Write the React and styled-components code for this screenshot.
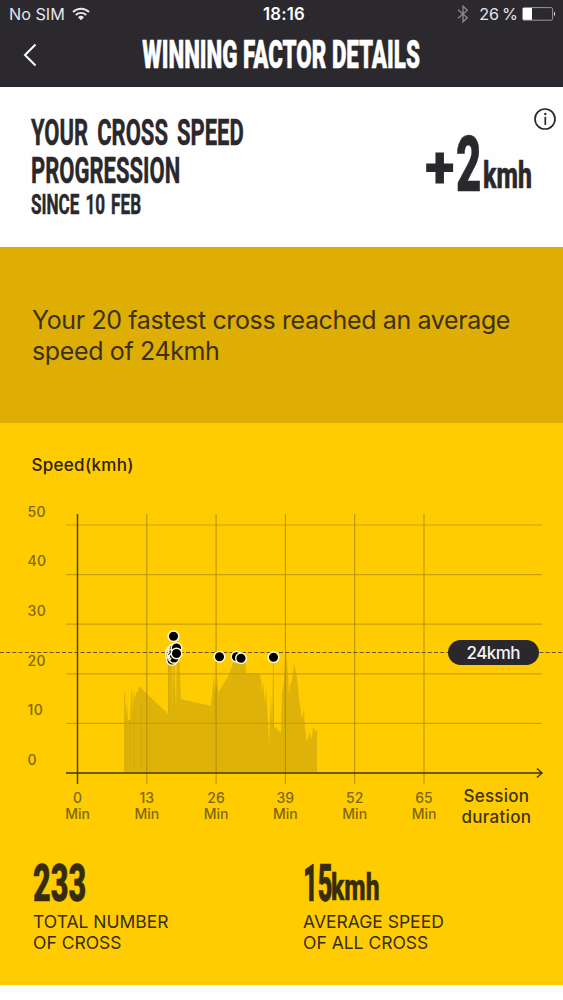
import React from 'react';
import styled, { createGlobalStyle } from 'styled-components';

const GlobalStyle = createGlobalStyle`
  * {
    box-sizing: border-box;
  }

  body {
    margin: 0;
    background: #fff;
    color: #2a282c;
    font-family: Inter, Roboto, sans-serif;
  }
`;

const Screen = styled.main`
  width: 563px;
  height: 1000px;
  overflow: hidden;
  background: #fefefe;
`;

const Header = styled.header`
  height: 87px;
  background: #2b292d;
  color: #fff;
`;

const StatusBar = styled.div`
  display: grid;
  grid-template-columns: 1fr auto 1fr;
  align-items: center;
  height: 28px;
  padding: 0 7px 0 9px;
  font-size: 16.2px;
`;

const StatusGroup = styled.div`
  display: flex;
  align-items: center;
  justify-content: ${({ $end }) => ($end ? 'flex-end' : 'flex-start')};
  gap: ${({ $gap }) => $gap}px;
  color: #e6e5e8;
`;

const Clock = styled.div`
  padding-left: 3px;
  font-size: 16.8px;
  font-weight: 600;
  letter-spacing: 0.2px;
`;

const Charge = styled.span`
  padding-left: 5px;
  margin-right: -1px;
  word-spacing: -1.5px;
`;

const NavBar = styled.div`
  display: grid;
  grid-template-columns: 60px minmax(0, 1fr) 60px;
  align-items: center;
  justify-items: center;
  height: 54px;
`;

const BackButton = styled.button`
  display: flex;
  padding: 0;
  border: 0;
  background: none;
  color: #fff;
`;

// Tall narrow display type, squeezed horizontally from a wide heavy weight
const Display = styled.span`
  display: block;
  width: max-content;
  font-family: Roboto, sans-serif;
  font-weight: ${({ $weight }) => $weight || 900};
  font-size: ${({ $size }) => $size}px;
  line-height: ${({ $line }) => $line}px;
  word-spacing: ${({ $word }) => $word || 0}px;
  white-space: nowrap;
  -webkit-text-stroke: ${({ $stroke }) => $stroke ?? 0.5}px currentColor;
  transform: scaleX(${({ $squeeze }) => $squeeze});
  transform-origin: ${({ $origin }) => $origin || 'left'} center;
`;

const Summary = styled.section`
  display: flex;
  justify-content: space-between;
  height: 160px;
  padding: 27px 31px 0 31px;
  background: #fefefe;
`;

const Headline = styled.div`
  width: 240px;
`;

const Gain = styled.div`
  display: flex;
  width: 107px;
`;

const Slot = styled.div`
  width: ${({ $width }) => $width}px;
  padding-top: ${({ $top }) => $top || 0}px;
`;

const InfoButton = styled.button`
  position: absolute;
  top: 107px;
  left: 533px;
  display: flex;
  padding: 0;
  border: 0;
  background: none;
  color: #2a282c;
`;

const Message = styled.section`
  height: 176px;
  padding: 58px 32px 0;
  background: #deae04;
  color: #3c3113;
  font-size: 25px;
  line-height: 31px;
  letter-spacing: -0.37px;
`;

const Report = styled.section`
  height: 562px;
  background: #ffcc02;
`;

const Chart = styled.svg`
  display: block;
  font-family: Inter, sans-serif;
`;

const Stats = styled.div`
  display: grid;
  grid-template-columns: 270px 1fr;
  padding: 18px 33px 0;
  color: #362c0e;
`;

const StatValue = styled.div`
  display: flex;
  height: 49px;
`;

const StatLabel = styled.div`
  font-size: 17.5px;
  line-height: 21px;
`;

const xTicks = [0, 13, 26, 39, 52, 65];
const yTicks = [50, 40, 30, 20, 10, 0];

const tickX = (i) => 77.5 + i * 69.3;
const tickY = (i) => 102 + i * 49.6;

const speedArea = `M124 349V271L125 268L126 295L127 278L128 297H130L131 272L132 264L133 290L134 266L135 276L136 270L138 268L139 263L168 291V228H172L173 290L174 225L176 290L177 222H179L181 276L211 283L213 262L214 252L215 270L217 262V252L218 270L221 265L224 260L228 254L231 245L234 238L236 232L239 229L241 234L243 239L245 233L246 250H259L261 256L262 270L263 258L265 280L266 264L268 300L269 322L270 298L271 270L272 303L273 235L274 304L276 305L281 310L282 270L284 258L285 232L286 226L288 252L289 274L290 262L292 258L294 240L297 254L299 275L302 296L304 286L305 306L307 320L309 310L312 316L313 304L315 308L317 307V349Z`;

// Faint spikes inside the area where samples sit close together
const areaStreaks = 'M126 290V346M130 296V340M134 280V345M141 280V346M168.500 240V290M174 240V290M215 262V300M273.500 240V306M284.500 250V306';

const crosses = [
  [172, 235], [171, 229], [174, 226], [171, 232], [172, 237], [174, 235],
  [176.5, 225], [176.5, 230.5], [173.5, 213.3], [219.5, 233.7], [236.5, 233.7],
  [241, 235.3], [273.5, 234.3],
];

const WifiIcon = () => (
  <svg width="18" height="14" viewBox="0 0 18 14" fill="none" stroke="currentColor" strokeWidth="1.9">
    <path d="M1 5a11.5 11.5 0 0 1 16 0" />
    <path d="M3.8 8a7.5 7.5 0 0 1 10.4 0" />
    <path d="M6 10.2a4.4 4.4 0 0 1 6 0L9 13.2z" fill="currentColor" stroke="none" />
  </svg>
);

const BluetoothIcon = () => (
  <svg width="12" height="18" viewBox="0 0 12 18" fill="none" stroke="#8b898d" strokeWidth="1.3">
    <path d="M1 4.8l9.3 8L6 16.8V1.2l4.3 4L1 13.2" />
  </svg>
);

const BatteryIcon = () => (
  <svg width="34" height="14" viewBox="0 0 34 14">
    <rect x=".6" y=".6" width="30" height="12.6" rx="1.5" fill="none" stroke="#99979b" strokeWidth="1" />
    <rect x="1" y="1" width="9" height="11.8" fill="#fff" />
    <path d="M32 4.5q2 2.4 0 4.8z" fill="#fff" />
  </svg>
);

const SpeedChart = () => (
  <Chart width="563" height="421" viewBox="0 0 563 421">
    <text x="31.500" y="48" fontSize="17" fontWeight="500" fill="#2b2309" textLength="102">Speed(kmh)</text>

    <path d={speedArea} fill="#deb208" />
    <path d={areaStreaks} stroke="#cfa407" strokeWidth=".8" opacity=".7" />

    {yTicks.map((tick, i) => (
      <g key={tick}>
        <text x="27.500" y={93.7 + i * 49.6} fontSize="14" fontWeight="500" letterSpacing=".4" fill="#81680a">{tick}</text>
        {tick > 0 && <path d={`M66 ${tickY(i)}H542`} stroke="#cb9f06" strokeWidth="1.2" />}
      </g>
    ))}

    {xTicks.map((tick, i) => (
      <g key={tick} fontSize="14" fontWeight="500" textAnchor="middle" fill="#81680a">
        <path d={`M${tickX(i)} 91V361`} stroke={i ? '#b58d06' : '#514108'} strokeWidth={i ? 1 : 1.5} />
        <text x={tickX(i)} y="379.500">{tick}</text>
        <text x={tickX(i)} y="395.500">Min</text>
      </g>
    ))}

    <path d="M66 350H541M537 345.500l5 4.500l-5 4.500" fill="none" stroke="#40340a" strokeWidth="1.5" />
    <path d="M0 229.500H563" stroke="#6b5508" strokeWidth="1.2" strokeDasharray="4 2.200" />

    {crosses.map(([x, y]) => (
      <circle key={`${x}-${y}`} cx={x} cy={y} r="5.300" fill="#000" stroke="#fff8dc" strokeWidth="1.500" />
    ))}
    <path d="M167 226l2 3l-2 3l3 3M168 224l2 1M169 238l2-3" fill="none" stroke="#fff8dc" strokeWidth="1.600" />

    <rect x="448" y="217" width="91" height="25" rx="12.500" fill="#2a282c" />
    <text x="493.500" y="235.500" fontSize="17" fontWeight="500" textAnchor="middle" fill="#f4f4f5" textLength="54">24kmh</text>

    <g fontSize="17" fontWeight="500" fill="#40340a">
      <text x="463.500" y="379" textLength="65.500">Session</text>
      <text x="461.500" y="399.500" textLength="69.500">duration</text>
    </g>
  </Chart>
);

const App = () => (
  <Screen>
    <GlobalStyle />
    <Header>
      <StatusBar>
        <StatusGroup $gap={7}>
          No SIM
          <WifiIcon />
        </StatusGroup>
        <Clock>18:16</Clock>
        <StatusGroup $gap={5} $end>
          <BluetoothIcon />
          <Charge>26 %</Charge>
          <BatteryIcon />
        </StatusGroup>
      </StatusBar>
      <NavBar>
        <BackButton aria-label="Back">
          <svg width="14" height="24" viewBox="0 0 14 24" fill="none" stroke="currentColor" strokeWidth="2">
            <path d="M12.500 1.500L2 12l10.500 10.500" />
          </svg>
        </BackButton>
        <Display $size={38} $line={54} $squeeze={0.588} $origin="center">WINNING FACTOR DETAILS</Display>
      </NavBar>
    </Header>

    <Summary>
      <Headline>
        <Display $size={37} $line={38} $weight={700} $squeeze={0.595} $word={6}>YOUR CROSS SPEED</Display>
        <Display $size={37} $line={38} $weight={700} $squeeze={0.595}>PROGRESSION</Display>
        <Display $size={28.5} $line={30} $weight={700} $squeeze={0.6} $word={3}>SINCE 10 FEB</Display>
      </Headline>
      <Gain>
        <Slot $width={31} $top={27}><Display $size={60} $line={54} $squeeze={0.92} $stroke={0}>+</Display></Slot>
        <Slot $width={27} $top={11}><Display $size={77} $line={80} $squeeze={0.57}>2</Display></Slot>
        <Slot $width={48} $top={40}><Display $size={36} $line={44} $weight={800} $squeeze={0.69}>kmh</Display></Slot>
      </Gain>
      <InfoButton aria-label="Info">
        <svg width="24" height="24" viewBox="0 0 24 24" fill="none" stroke="currentColor" strokeWidth="1.700">
          <circle cx="12" cy="12" r="10" />
          <path d="M12.300 9.800V18" />
          <circle cx="12.300" cy="7" r="1.200" fill="currentColor" stroke="none" />
        </svg>
      </InfoButton>
    </Summary>

    <Message>
      Your 20 fastest cross reached an average
      <br />
      speed of 24kmh
    </Message>

    <Report>
      <SpeedChart />
      <Stats>
        <div>
          <StatValue>
            <Slot $width={56}><Display $size={51} $line={44} $squeeze={0.6}>233</Display></Slot>
          </StatValue>
          <StatLabel>TOTAL NUMBER<br />OF CROSS</StatLabel>
        </div>
        <div>
          <StatValue>
            <Slot $width={28}><Display $size={51} $line={44} $squeeze={0.5}>15</Display></Slot>
            <Slot $width={50} $top={4}><Display $size={36} $line={44} $weight={800} $squeeze={0.685}>kmh</Display></Slot>
          </StatValue>
          <StatLabel>AVERAGE SPEED<br />OF ALL CROSS</StatLabel>
        </div>
      </Stats>
    </Report>
  </Screen>
);

export default App;
